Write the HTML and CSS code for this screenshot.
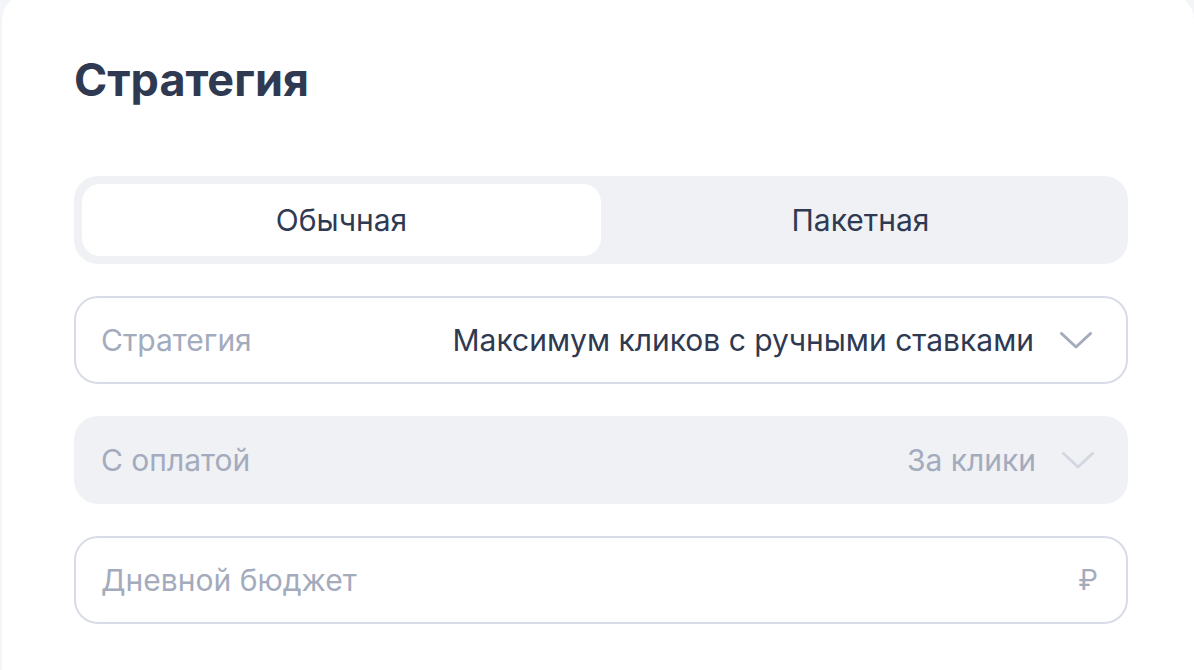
FILE: index.html
```html
<!DOCTYPE html>
<html lang="ru">
<head>
<meta charset="utf-8">
<link rel="stylesheet" href="styles.css">
</head>
<body>
<div class="card">
  <h1 class="title">Стратегия</h1>
  <div class="segmented">
    <div class="seg seg-active">Обычная</div>
    <div class="seg">Пакетная</div>
  </div>
  <div class="field field-outline">
    <span class="label">Стратегия</span>
    <span class="value">Максимум кликов с ручными ставками</span>
    <svg class="chevron" width="32" height="17" viewBox="0 0 32 17"><path d="M1.5 1.5 L16 15 L30.5 1.5" fill="none" stroke="#a3abbd" stroke-width="3" stroke-linecap="round" stroke-linejoin="round"/></svg>
  </div>
  <div class="field field-filled">
    <span class="label">С оплатой</span>
    <span class="value value-muted">За клики</span>
    <svg class="chevron" width="32" height="17" viewBox="0 0 32 17"><path d="M1.5 1.5 L16 15 L30.5 1.5" fill="none" stroke="#d3d7e1" stroke-width="3" stroke-linecap="round" stroke-linejoin="round"/></svg>
  </div>
  <div class="field field-outline field-last">
    <span class="label">Дневной бюджет</span>
    <span class="currency">₽</span>
  </div>
</div>
</body>
</html>
```
FILE: styles.css
```css
* { box-sizing: border-box; }
html, body { margin: 0; padding: 0; }
body {
  background: #f4f5f8;
  font-family: Inter, "Noto Sans", sans-serif;
  color: #2f3a52;
  height: 670px;
  overflow: hidden;
}
.card {
  background: #fff;
  margin: -6px 0 0 2px;
  border-radius: 26px 26px 0 0;
  padding: 58px 66px 0 72px;
  height: 676px;
}
.title {
  margin: 0 0 68px;
  font-size: 45px;
  line-height: 56px;
  font-weight: 700;
  color: #2f3a52;
}
.segmented {
  display: flex;
  background: #eff1f5;
  border-radius: 24px;
  padding: 8px;
  height: 88px;
  margin-bottom: 32px;
}
.seg {
  flex: 1;
  display: flex;
  align-items: center;
  justify-content: center;
  font-size: 30px;
  border-radius: 18px;
  color: #2f3a52;
}
.seg-active { background: #fff; }
.field {
  display: flex;
  align-items: center;
  height: 88px;
  border-radius: 24px;
  padding: 0 34px 0 25px;
  margin-bottom: 32px;
  font-size: 30px;
}
.field-last { margin-bottom: 0; }
.field-outline { border: 2px solid #d9dce6; }
.field-filled { background: #eff1f5; padding-left: 27px; }
.label { color: #a3abbd; flex: 1; }
.value { color: #2f3a52; }
.value-muted { color: #a3abbd; }
.chevron { margin-left: 26px; flex: none; }
.currency { color: #a3abbd; font-size: 28px; margin-right: -6px; }
```
